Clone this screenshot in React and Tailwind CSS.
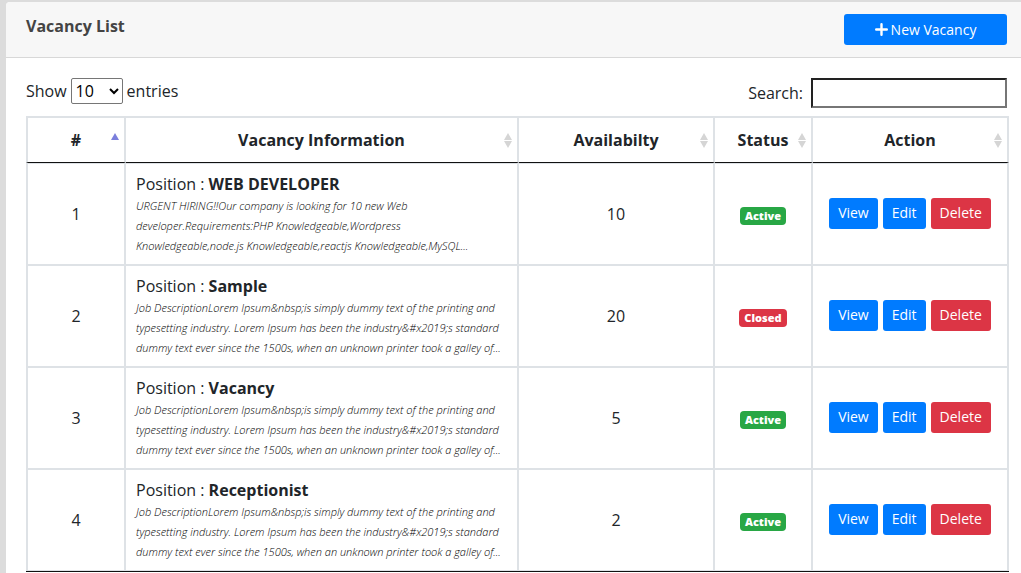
import React from "react";

const LOREM =
  "Job DescriptionLorem Ipsum&nbsp;is simply dummy text of the printing and\ntypesetting industry. Lorem Ipsum has been the industry&#x2019;s standard\ndummy text ever since the 1500s, when an unknown printer took a galley of";

const VACANCIES = [
  {
    position: "WEB DEVELOPER",
    description:
      "URGENT HIRING!!Our company is looking for 10 new Web\ndeveloper.Requirements:PHP Knowledgeable,Wordpress\nKnowledgeable,node.js Knowledgeable,reactjs Knowledgeable,MySQL",
    available: 10,
    active: true,
  },
  { position: "Sample", description: LOREM, available: 20, active: false },
  { position: "Vacancy", description: LOREM, available: 5, active: true },
  { position: "Receptionist", description: LOREM, available: 2, active: true },
];

const COLUMNS = [
  { label: "#", width: "w-[100px]", sorted: true },
  { label: "Vacancy Information", width: "" },
  { label: "Availabilty", width: "w-[196px]" },
  { label: "Status", width: "w-[98px]" },
  { label: "Action", width: "w-[196px]" },
];

function SortIcon({ sorted }) {
  return (
    <svg viewBox="0 0 9 16" className="absolute top-[15px] right-1 h-4 w-[9px]" aria-hidden="true">
      {sorted ? (
        <path d="M4 0 8 7H0z" fill="#7b7fdc" />
      ) : (
        <path d="M4 0 8 7H0zM0 8h8l-4 7z" fill="#d5d5d5" />
      )}
    </svg>
  );
}

function ActionButton({ tone, children }) {
  return (
    <button
      type="button"
      className={`h-[31px] rounded-[3px] px-[9px] text-sm font-normal text-white ${
        tone === "danger" ? "bg-[#dc3545]" : "bg-[#007bff]"
      }`}
    >
      {children}
    </button>
  );
}

function VacancyRow({ vacancy, index, first, last }) {
  const edge = `border-[#dee2e6] border-r-2 ${first ? "border-t" : ""} ${last ? "border-b" : "border-b-2"}`;
  return (
    <tr>
      <td className={`${edge} border-l-2 text-center`}>{index}</td>
      <td className={`${edge} px-[10px] py-2`}>
        <p className="leading-6">
          Position : <b className="font-bold">{vacancy.position}</b>
        </p>
        <p className="whitespace-pre-line text-[11px] leading-5 font-light text-black italic">
          {`${vacancy.description}...`}
        </p>
      </td>
      <td className={`${edge} text-center`}>{vacancy.available}</td>
      <td className={`${edge} text-center`}>
        <span
          className={`inline-block rounded-[4px] px-[5px] text-[11px] leading-[18px] font-extrabold text-white ${
            vacancy.active ? "bg-[#28a745]" : "bg-[#dc3545]"
          }`}
        >
          {vacancy.active ? "Active" : "Closed"}
        </span>
      </td>
      <td className={`${edge} pb-[2px]`}>
        <div className="flex justify-center gap-[5px]">
          <ActionButton>View</ActionButton>
          <ActionButton>Edit</ActionButton>
          <ActionButton tone="danger">Delete</ActionButton>
        </div>
      </td>
    </tr>
  );
}

export default function App() {
  return (
    <main className="min-h-screen bg-[#dcdcdc] pt-[2px] pl-[6px] font-['Open_Sans',sans-serif] text-base font-normal text-[#212529]">
      <section className="min-h-[calc(100vh-2px)] rounded-tl-[4px] bg-white">
        <header className="flex items-start justify-between rounded-tl-[4px] border-b border-[#d8d8d8] bg-[#f7f7f7] py-3 pr-[14px] pl-5">
          <h1 className="leading-6 font-bold text-[#444]">Vacancy List</h1>
          <button
            type="button"
            className="flex h-[31px] w-[163px] items-center justify-center gap-[3px] rounded-[3px] bg-[#007bff] text-sm font-normal text-white"
          >
            <svg viewBox="0 0 13 13" className="size-[13px]" aria-hidden="true">
              <path d="M6.5 1.2v10.6M1.2 6.5h10.6" stroke="currentColor" strokeWidth="2.4" strokeLinecap="round" />
            </svg>
            New Vacancy
          </button>
        </header>

        <div className="pt-5 pr-3 pl-5">
          <div className="flex items-start justify-between pr-[2px] pb-2">
            <label className="flex items-center gap-1">
              Show
              <select
                defaultValue="10"
                className="h-[26px] w-[52px] rounded-[2px] border border-[#767676] bg-white text-black"
              >
                <option>10</option>
                <option>25</option>
                <option>50</option>
                <option>100</option>
              </select>
              entries
            </label>
            <label className="flex items-center gap-2">
              Search:
              <input
                type="search"
                className="h-[30px] w-[196px] border-2 border-t-[#222] border-r-[#767676] border-b-[#767676] border-l-[#222] bg-white px-1 outline-none"
              />
            </label>
          </div>

          <table className="w-full table-fixed border-separate border-spacing-0 border-b border-[#111]">
            <thead>
              <tr>
                {COLUMNS.map((column, i) => (
                  <th
                    key={column.label}
                    scope="col"
                    className={`relative h-[47px] border-t-2 border-r-2 border-b border-t-[#dee2e6] border-r-[#dee2e6] border-b-[#111] text-center font-bold ${
                      i === 0 ? "border-l-2 border-l-[#dee2e6]" : ""
                    } ${column.width}`}
                  >
                    {column.label}
                    <SortIcon sorted={column.sorted} />
                  </th>
                ))}
              </tr>
            </thead>
            <tbody>
              {VACANCIES.map((vacancy, i) => (
                <VacancyRow
                  key={vacancy.position}
                  vacancy={vacancy}
                  index={i + 1}
                  first={i === 0}
                  last={i === VACANCIES.length - 1}
                />
              ))}
            </tbody>
          </table>
        </div>
      </section>
    </main>
  );
}
